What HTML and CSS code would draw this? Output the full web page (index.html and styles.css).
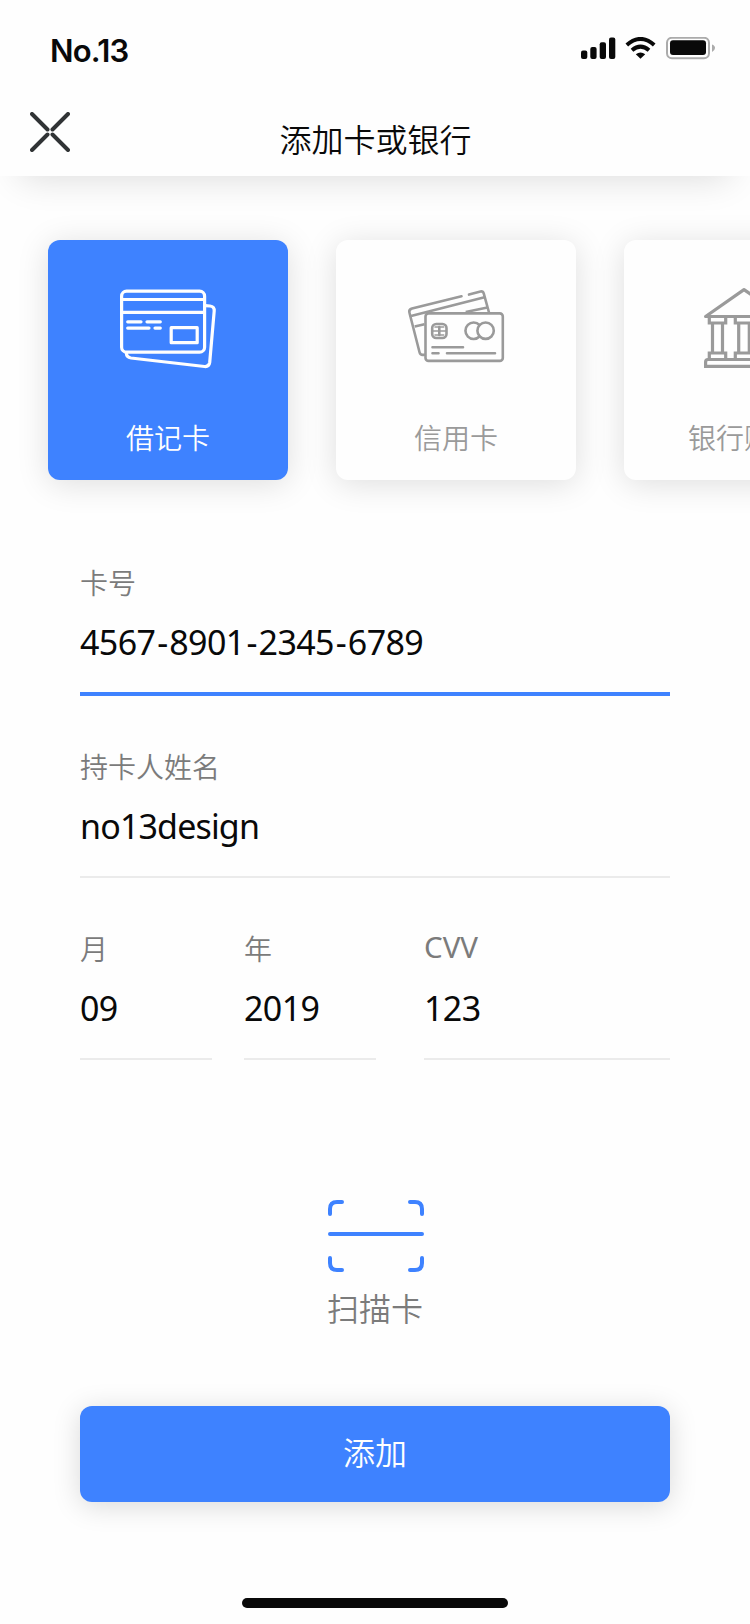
FILE: index.html
```html
<!DOCTYPE html>
<html lang="zh-CN">
<head>
<meta charset="utf-8">
<title>添加卡或银行</title>
<link rel="stylesheet" href="styles.css">
</head>
<body>
<div class="screen">
  <header class="header">
    <div class="status">
      <span class="status-name">No.13</span>
      <svg class="status-icons" width="136" height="24" viewBox="0 0 136 24">
        <g fill="#090909">
          <rect x="0" y="13.5" width="6.3" height="8.5" rx="2"/>
          <rect x="9.3" y="10" width="6.3" height="12" rx="2"/>
          <rect x="18.7" y="5.2" width="6.3" height="16.8" rx="2"/>
          <rect x="28" y="0.5" width="6.3" height="21.5" rx="2"/>
          <path d="M54.8 17.2Q59.5 13.6 64.2 17.2L59.5 21.8Z"/>
          <rect x="89" y="3.3" width="36" height="14.7" rx="3"/>
        </g>
        <g fill="none" stroke="#090909" stroke-width="4">
          <path d="M45.8 7.9Q59.5 -4 73.2 7.9"/>
          <path d="M51 13.2Q59.5 6 68 13.2"/>
        </g>
        <rect x="86" y="0.8" width="42" height="20.4" rx="5" fill="none" stroke="#ababab" stroke-width="2"/>
        <path d="M131 7.5Q134 8.500 134 11T131 14.900Z" fill="#ababab"/>
      </svg>
    </div>
    <div class="nav">
      <svg class="close" width="40" height="40" viewBox="0 0 40 40" fill="none" stroke="#303335" stroke-width="4" stroke-linecap="round">
        <path d="M2 2L17.500 17.500M38 2L22.500 17.500M2 38L17.500 22.500M38 38L22.500 22.500"/>
      </svg>
      <h1 class="title">添加卡或银行</h1>
    </div>
  </header>

  <section class="cards">
    <div class="card card-active">
      <svg class="card-icon" width="96" height="80" viewBox="0 0 96 80" fill="none" stroke="currentColor" stroke-width="3.200" stroke-linecap="round">
        <rect x="1.600" y="1.200" width="83" height="61" rx="5"/>
        <path d="M2 9.500H84M2 22.300H84" stroke-linecap="butt"/>
        <path d="M7.700 31.800H21M27 31.800H40.300M7.700 38.100H29M35 38.100H40.300"/>
        <rect x="51.200" y="37.700" width="26" height="15" stroke-linejoin="round"/>
        <path d="M85.500 15.600L90 16Q94.500 16.500 94.200 21L89.700 72.500Q89 77 84.500 76.500L11 68Q6.500 67.300 6.300 63"/>
      </svg>
      <span class="card-name">借记卡</span>
    </div>
    <div class="card">
      <svg class="card-icon" width="96" height="80" viewBox="0 0 96 80" fill="none" stroke="currentColor" stroke-width="2.600" stroke-linecap="round">
        <rect x="17.500" y="23.400" width="77.300" height="47.500" rx="3"/>
        <rect x="24.200" y="34" width="14.300" height="14" rx="4"/>
        <path d="M31.300 37V45" />
        <path d="M27 37H35.700M25 41H37.700M27 45H35.700" stroke-width="1.600"/>
        <circle cx="77.600" cy="40.700" r="8.200"/>
        <path d="M71.500 35A8.200 8.200 0 1 0 71.500 46.500"/>
        <path d="M24.500 57.200H55M24.500 63.300H30.500M39 63.300H87"/>
        <path d="M53.500 6.300L4 18.600Q0.700 19.600 1.400 22.500L11.600 62.500Q12.400 65.700 16.500 64.700M61 4.600L72.500 1.500Q75 1 75.800 3.600L81 22.500" />
        <path d="M3 26L76.500 7.200M6.700 36.600L16.500 34.200M57.700 22L79.500 17.500" stroke-linecap="butt"/>
      </svg>
      <span class="card-name">信用卡</span>
    </div>
    <div class="card">
      <svg class="card-icon card-icon-bank" width="80" height="80" viewBox="0 0 80 80" fill="none" stroke="currentColor" stroke-width="3.200">
        <path d="M1.600 28.500L40 1.600L78.400 28.500Z" stroke-linejoin="round"/>
        <path d="M5.300 29V35H21.700V29M31.300 29V35H48.700V29M58.300 29V35H74.700V29"/>
        <path d="M8.500 35V65M18.500 35V65M34.700 35V65M45.300 35V65M61.500 35V65M71.500 35V65"/>
        <path d="M5.300 71V65H21.700V71M31.300 71V65H48.700V71M58.300 71V65H74.700V71"/>
        <path d="M1.600 78.400V74Q1.600 71.500 4 71.500H76Q78.400 71.500 78.400 74V78.400Z"/>
      </svg>
      <span class="card-name">银行账户</span>
    </div>
  </section>

  <main class="form">
    <div class="field field-active">
      <span class="label">卡号</span>
      <span class="value number">4567<i class="dash">-</i>8901<i class="dash">-</i>2345<i class="dash">-</i>6789</span>
    </div>
    <div class="field">
      <span class="label">持卡人姓名</span>
      <span class="value name">no13design</span>
    </div>
    <div class="row">
      <div class="field month">
        <span class="label">月</span>
        <span class="value number">09</span>
      </div>
      <div class="field year">
        <span class="label">年</span>
        <span class="value number">2019</span>
      </div>
      <div class="field cvv">
        <span class="label label-latin">CVV</span>
        <span class="value number">123</span>
      </div>
    </div>
    <div class="scan">
      <svg class="scan-icon" width="96" height="72" viewBox="0 0 96 72" fill="none" stroke="#3e82ff" stroke-width="4" stroke-linecap="round">
        <path d="M2 14V9Q2 2 9 2H14M82 2H87Q94 2 94 9V14M2 58V63Q2 70 9 70H14M82 70H87Q94 70 94 63V58M2 34H94"/>
      </svg>
      <span class="scan-name">扫描卡</span>
    </div>
    <button class="submit" type="button">添加</button>
  </main>
  <div class="home-bar"></div>
</div>
</body>
</html>
```
FILE: styles.css
```css
* { box-sizing: border-box; }

body {
  margin: 0;
  background: #fefefe;
  color: #090909;
  font-family: "Noto Sans", "Noto Sans CJK SC", sans-serif;
}

.screen {
  display: flex;
  flex-direction: column;
  width: 750px;
  height: 1624px;
  overflow: hidden;
}

.header {
  height: 176px;
  flex: none;
  background: #fefefe;
  box-shadow: 0 22px 34px -20px rgba(0, 0, 0, 0.14);
}

.status {
  display: flex;
  justify-content: space-between;
  align-items: flex-start;
  height: 100px;
  padding: 37px 33px 0 50px;
}

.status-name {
  margin-top: -5px;
  font: 600 31px/38px Inter, sans-serif;
  letter-spacing: -0.8px;
}

.nav {
  display: grid;
  grid-template-columns: 40px 1fr 40px;
  padding: 12px 30px 0;
}

.title {
  margin: 2px 0 0 1px;
  font: 350 32px/48px "Noto Sans CJK SC", sans-serif;
  text-align: center;
}

.cards {
  display: flex;
  flex: none;
  gap: 48px;
  padding: 64px 0 0 48px;
}

.card {
  display: flex;
  flex: none;
  flex-direction: column;
  align-items: center;
  width: 240px;
  height: 240px;
  padding-top: 50px;
  border-radius: 12px;
  background: #fefefe;
  color: #9a9a9a;
  box-shadow: 0 4px 32px rgba(0, 0, 0, 0.13);
}

.card-active {
  background: #3e82ff;
  color: #fefefe;
}

.card-icon { overflow: visible; }

.card-icon-bank { margin: -2px 0 2px; }

.card-name {
  margin-top: 46px;
  font: 350 28px/42px "Noto Sans CJK SC", sans-serif;
}

.form {
  display: flex;
  flex: none;
  flex-direction: column;
  padding: 81px 80px 0;
}

.field {
  display: flex;
  flex-direction: column;
  height: 133px;
  border-bottom: 2px solid #ebebeb;
}

.field + .field { margin-top: 49px; }

.field-active {
  height: 135px;
  border-bottom: 4px solid #3e82ff;
}

.label {
  height: 42px;
  color: #7b7b7b;
  font: 350 28px/42px "Noto Sans CJK SC", sans-serif;
}

.label-latin {
  font: 400 29.500px/40px "Noto Sans", sans-serif;
}

.value {
  margin-top: 15px;
  font-size: 34px;
  line-height: 48px;
  white-space: nowrap;
}

.number { letter-spacing: -0.600px; }

.name { letter-spacing: -0.850px; }

.dash {
  margin: 0 1.750px;
  font-style: normal;
}

.row {
  display: flex;
  margin-top: 49px;
}

.row .field { margin: 0; height: 133px; }
.row .month { width: 132px; }
.row .year { width: 132px; margin-left: 32px; }
.row .cvv { flex: 1; margin-left: 48px; }

.scan {
  display: flex;
  flex-direction: column;
  align-items: center;
  margin-top: 140px;
}

.scan-icon { margin-left: 2px; }

.scan-name {
  margin-top: 11px;
  color: #7b7b7b;
  font: 350 32px/48px "Noto Sans CJK SC", sans-serif;
}

.submit {
  height: 96px;
  margin-top: 75px;
  padding: 0 0 6px;
  border: 0;
  border-radius: 12px;
  background: #3e82ff;
  color: #fefefe;
  font: 350 32px/48px "Noto Sans CJK SC", sans-serif;
  box-shadow: 0 4px 28px rgba(0, 0, 0, 0.15);
}

.home-bar {
  flex: none;
  width: 266px;
  height: 10px;
  margin: auto auto 16px;
  border-radius: 5px;
  background: #090909;
}
```
